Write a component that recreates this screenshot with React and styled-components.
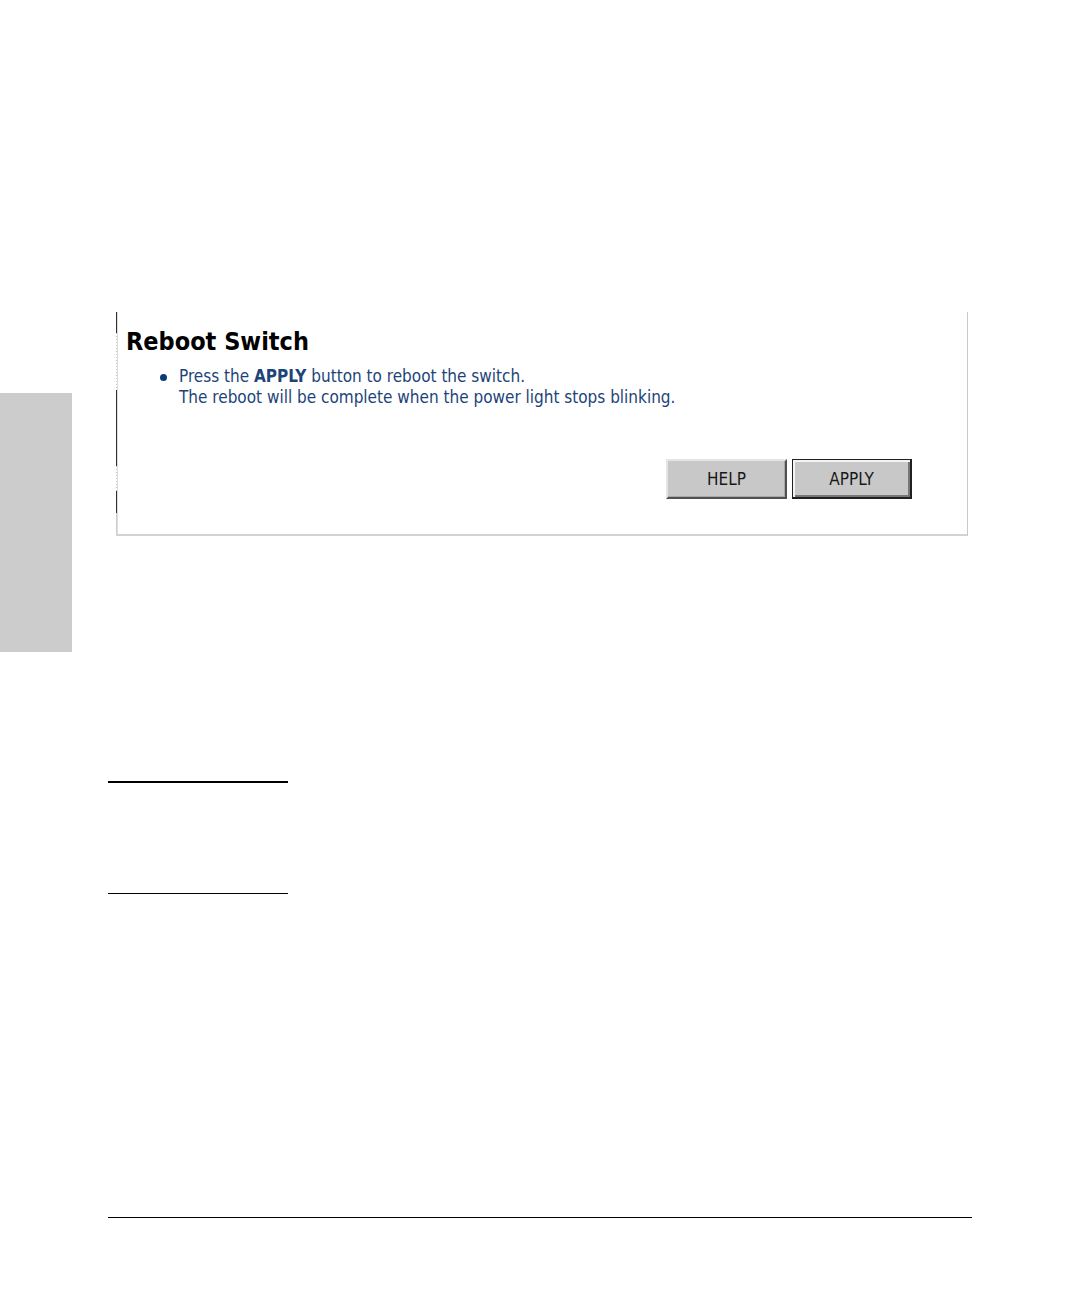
import styled, { createGlobalStyle } from 'styled-components'

const GlobalStyle = createGlobalStyle`
  * {
    box-sizing: border-box;
  }
  body {
    margin: 0;
    background: #ffffff;
    font-family: 'DejaVu Sans Condensed', 'DejaVu Sans', sans-serif;
  }
`
const Page = styled.div`
  display: flex;
  min-height: 100vh;
`
const SideTab = styled.aside`
  flex: 0 0 72px;
  height: 259px;
  margin-top: 393px;
  background: #cccccc;
`
const Main = styled.main`
  flex: 1;
  display: flex;
  flex-direction: column;
  padding: 312px 108px 78px 36px;
`
const Panel = styled.section`
  display: flex;
  margin: 0 4px 0 8px;
  border-right: 1px solid #c8c8c8;
  border-bottom: 2px solid #d4d3d0;
`
const Edge = styled.div`
  display: flex;
  flex-direction: column;
  width: 2px;
  border-right: 1px solid #dddddd;
`
const Solid = styled.div`
  height: ${(props) => props.$size}px;
  background: ${(props) => (props.$light ? '#cccccc' : '#303030')};
`
const Dotted = styled.div`
  height: ${(props) => props.$size}px;
  background: repeating-linear-gradient(#cccccc 0 1px, #ffffff 1px 3px);
`
const Content = styled.div`
  flex: 1;
  padding: 16px 55px 35px 8px;
`
const Title = styled.h1`
  margin: 0;
  font-size: 25px;
  font-weight: bold;
  line-height: 28px;
  color: #000000;
`
const List = styled.ul`
  margin: 10px 0 0;
  padding: 0 0 0 34px;
  list-style: none;
`
const Item = styled.li`
  display: flex;
  gap: 12px;
  font-size: 17px;
  line-height: 21px;
  color: #1c4478;
`
const Bullet = styled.span`
  width: 7px;
  height: 7px;
  margin-top: 8px;
  border-radius: 50%;
  background: #0c3a78;
`
const Actions = styled.div`
  display: flex;
  justify-content: flex-end;
  gap: 5px;
  margin-top: 51px;
`
const Button = styled.button`
  width: 121px;
  height: 40px;
  padding: 0;
  border: 2px solid;
  border-color: #e4e4e4 #505050 #505050 #e4e4e4;
  background: #c8c8c8;
  box-shadow: inset -1px -1px #a8a8a8;
  font-family: inherit;
  font-size: 17px;
  color: #181818;
`
const DefaultButton = styled(Button)`
  width: 120px;
  border: 1px solid #202020;
  border-right-width: 2px;
  border-bottom-width: 2px;
  box-shadow: inset 2px 2px #f4f4f4, inset -2px -2px #777777;
`
const NoteRule = styled.hr`
  width: 180px;
  height: ${(props) => props.$weight}px;
  margin: ${(props) => props.$gap}px 0 0;
  border: 0;
  background: #000000;
`
const FooterRule = styled.hr`
  width: 100%;
  height: 1px;
  margin: auto 0 0;
  border: 0;
  background: #000000;
`

const App = () => {
  return (
    <>
      <GlobalStyle />
      <Page>
        <SideTab />
        <Main>
          <Panel>
            <Edge>
              <Solid $size={21} />
              <Dotted $size={57} />
              <Solid $size={76} />
              <Dotted $size={25} />
              <Solid $size={22} />
              <Solid $size={21} $light />
            </Edge>
            <Content>
              <Title>Reboot Switch</Title>
              <List>
                <Item>
                  <Bullet />
                  <span>
                    Press the <b>APPLY</b> button to reboot the switch.
                    <br />
                    The reboot will be complete when the power light stops
                    blinking.
                  </span>
                </Item>
              </List>
              <Actions>
                <Button type="button">HELP</Button>
                <DefaultButton type="submit">APPLY</DefaultButton>
              </Actions>
            </Content>
          </Panel>
          <NoteRule $weight={2} $gap={245} />
          <NoteRule $weight={1} $gap={110} />
          <FooterRule />
        </Main>
      </Page>
    </>
  )
}

export default App
